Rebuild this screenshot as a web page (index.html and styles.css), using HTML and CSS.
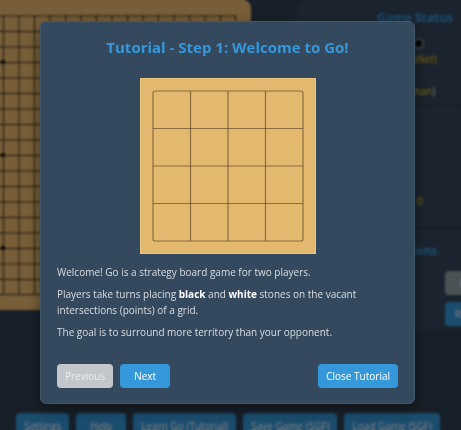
FILE: index.html
```html
<!DOCTYPE html>
<html lang="en">
<head>
    <meta charset="UTF-8">
    <meta name="viewport" content="width=device-width, initial-scale=1.0">
    <title>Go</title>
    <link rel="stylesheet" href="styles.css">
</head>
<body>

    <div class="app">
        <div class="main">
            <!-- 19x19 board, lines drawn with a repeating pattern -->
            <div class="board-wrap">
                <svg class="board" width="310" height="310" viewBox="0 0 310 310">
                    <defs>
                        <pattern id="cell" x="15.5" y="15.5" width="15.5" height="15.5" patternUnits="userSpaceOnUse">
                            <path d="M0 0.5 H15.5 M0.5 0 V15.5" stroke="#3b2812" stroke-width="1" fill="none"/>
                        </pattern>
                    </defs>
                    <rect x="0" y="0" width="310" height="310" rx="8" fill="#eebd72"/>
                    <rect x="15" y="15" width="279" height="279" fill="url(#cell)"/>
                    <path d="M15 294.5 H294.5 M294.5 15 V294.5" stroke="#3b2812" stroke-width="1"/>
                    <circle cx="62" cy="62" r="2.2" fill="#111"/>
                    <circle cx="62" cy="155" r="2.2" fill="#111"/>
                    <circle cx="62" cy="248" r="2.2" fill="#111"/>
                    <circle cx="155" cy="62" r="2.2" fill="#111"/>
                    <circle cx="155" cy="155" r="2.2" fill="#111"/>
                    <circle cx="155" cy="248" r="2.2" fill="#111"/>
                    <circle cx="248" cy="62" r="2.2" fill="#111"/>
                    <circle cx="248" cy="155" r="2.2" fill="#111"/>
                    <circle cx="248" cy="248" r="2.2" fill="#111"/>
                </svg>
            </div>

            <div class="sidebar">
                <div class="panel-section players">
                    <h3>Game Status</h3>
                    <div class="turn"><span>Turn</span><span class="stone"></span></div>
                    <p class="center"><span class="hl">(KataNet)</span></p>
                    <p class="label">White</p>
                    <p class="center">(<span class="hl">Human</span>)</p>
                </div>
                <div class="panel-section stats">
                    <p class="label">Move: 1</p>
                    <p class="label">Komi: 6.5</p>
                    <p class="label">Rules: Japanese</p>
                    <p class="label">Captures</p>
                    <p class="label">Black: 0</p>
                    <p class="stat"><span class="stat-name">White</span><span class="hl">0</span></p>
                </div>
                <div class="panel-section">
                    <h3 class="actions-title">Actions</h3>
                    <div class="action-row">
                        <button class="btn">Hint</button>
                        <button class="btn btn-grey">Pass</button>
                    </div>
                    <div class="action-row">
                        <button class="btn">Undo</button>
                        <button class="btn">Resign</button>
                    </div>
                </div>
            </div>
        </div>

        <div class="controls">
            <button class="btn">Settings</button>
            <button class="btn">Help</button>
            <button class="btn">Learn Go (Tutorial)</button>
            <button class="btn">Save Game (SGF)</button>
            <button class="btn">Load Game (SGF)</button>
        </div>
    </div>

    <!-- Tutorial dialog -->
    <div class="overlay">
        <div class="modal">
            <h2 class="modal-title">Tutorial - Step 1: Welcome to Go!</h2>
            <svg class="mini-board" width="176" height="176" viewBox="0 0 176 176">
                <rect x="0.5" y="0.5" width="175" height="175" fill="#e3b86f" stroke="#ecc583"/>
                <g stroke="#5c4526" stroke-opacity="0.65" stroke-width="1.2" fill="none">
                    <rect x="13" y="13" width="150" height="150" rx="2"/>
                    <path d="M50.5 13 V163 M88 13 V163 M125.5 13 V163"/>
                    <path d="M13 50.5 H163 M13 88 H163 M13 125.5 H163"/>
                </g>
            </svg>
            <div class="modal-text">
                <p>Welcome! Go is a strategy board game for two players.</p>
                <p>Players take turns placing <strong>black</strong> and <strong>white</strong> stones on the vacant intersections (points) of a grid.</p>
                <p>The goal is to surround more territory than your opponent.</p>
            </div>
            <div class="modal-buttons">
                <button class="btn btn-disabled">Previous</button>
                <button class="btn">Next</button>
                <button class="btn btn-close">Close Tutorial</button>
            </div>
        </div>
    </div>

</body>
</html>
```

FILE: styles.css
```css
body {
    margin: 0;
    background-color: #2f3e50;
    font-family: "Open Sans", "Noto Sans", sans-serif;
    color: #ecf0f1;
    overflow: hidden;
}
.app {
    display: flex;
    flex-direction: column;
}
.main {
    display: flex;
    align-items: flex-start;
}
.board-wrap {
    margin-left: -59px;
    flex-shrink: 0;
}
.board {
    display: block;
}
.sidebar {
    flex-shrink: 0;
    width: 236px;
    margin-left: 46px;
    background-color: #36485c;
    border-radius: 8px;
    padding: 0 16px 4px;
    box-sizing: border-box;
}
.panel-section {
    border-bottom: 1px solid #27343f;
}
.panel-section:last-child {
    border-bottom: none;
}
.players {
    padding-bottom: 6px;
}
.stats {
    padding: 7px 0 19px;
}
h3 {
    color: #3498db;
    font-size: 12px;
    line-height: 16px;
    text-align: center;
    margin: 10px 0 9px;
}
.actions-title {
    margin: 14px 0 12px;
}
.sidebar p {
    font-size: 10px;
    line-height: 16px;
    margin: 0;
}
.center {
    text-align: center;
}
.label {
    text-align: left;
}
.turn {
    display: flex;
    align-items: center;
    justify-content: center;
    gap: 4px;
    height: 16px;
    font-size: 10px;
    padding-right: 18px;
}
.stone {
    display: inline-block;
    width: 7px;
    height: 7px;
    border-radius: 50%;
    background-color: #000;
    border: 2px solid #7c8790;
}
.stat {
    display: flex;
}
.stat-name {
    width: 104px;
}
.hl {
    color: #f1c40f;
}
.action-row {
    display: flex;
    justify-content: space-between;
    margin: 0 22px 7px 0;
}
.action-row:last-child {
    margin-bottom: 0;
}
.btn {
    height: 24px;
    min-width: 50px;
    padding: 0 8px;
    border: none;
    border-radius: 4px;
    background-color: #3498db;
    color: #fff;
    font-family: inherit;
    font-size: 10px;
    cursor: pointer;
}
.btn-grey {
    background-color: #95a5a6;
}
.controls {
    display: flex;
    gap: 7px;
    padding-left: 16px;
    margin-top: 83px;
}
.controls .btn {
    height: 26px;
}

/* dialog */
.overlay {
    position: fixed;
    inset: 0;
    background-color: rgba(0, 0, 0, 0.5);
    backdrop-filter: blur(1px);
    display: flex;
    align-items: flex-start;
    padding: 21px 0 0 40px;
}
.modal {
    width: 375px;
    box-sizing: border-box;
    background-color: #34495e;
    border: 1px solid #44586c;
    border-radius: 6px;
    padding: 15px 16px 15px;
    box-shadow: 0 4px 14px rgba(0, 0, 0, 0.4);
}
.modal-title {
    color: #3498db;
    font-size: 15px;
    line-height: 20px;
    text-align: center;
    margin: 0 0 21px;
}
.mini-board {
    display: block;
    margin: 0 auto;
}
.modal-text {
    margin-top: 10px;
    font-size: 10px;
    line-height: 16px;
    color: #d9dee3;
}
.modal-text p {
    margin: 0 0 6px;
}
.modal-text strong {
    color: #fff;
}
.modal-buttons {
    display: flex;
    gap: 7px;
    margin-top: 24px;
}
.btn-disabled {
    background-color: #c3c7cb;
    color: #eceeef;
}
.btn-close {
    margin-left: auto;
}
```
